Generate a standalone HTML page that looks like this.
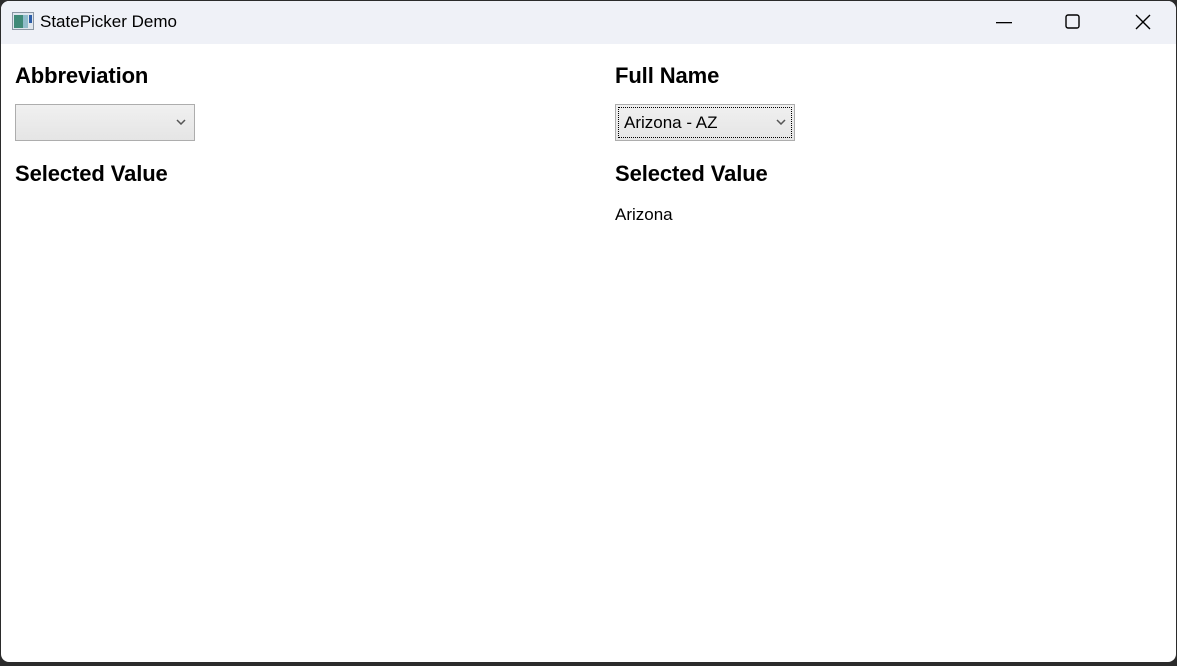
<!DOCTYPE html>
<html><head><style>
html,body{margin:0;padding:0;width:1177px;height:666px;overflow:hidden;background:#2b2b2b;font-family:"Liberation Sans",sans-serif;}
.win{position:absolute;left:1px;top:1px;width:1175px;height:661px;background:#fff;border-radius:8px;overflow:hidden;}
.tb{position:absolute;left:0;top:0;width:100%;height:43px;background:#eff1f7;}
.title{position:absolute;left:39px;top:11px;font-size:17px;color:#000;}
.h{position:absolute;font-size:22px;font-weight:bold;color:#000;letter-spacing:-0.1px;}
.cb{position:absolute;width:180px;height:37px;border:1px solid #adadad;background:linear-gradient(#f0f0f0,#e5e5e5);box-sizing:border-box;}
.chev{position:absolute;right:8px;top:14px;}
.t{position:absolute;font-size:17px;color:#000;}
</style></head><body>
<div class="win">
<div class="tb">
 <svg style="position:absolute;left:11px;top:11px" width="22" height="18" viewBox="0 0 22 18"><rect x="0.5" y="0.5" width="21" height="17" fill="#dfe6ee" stroke="#8a96a3"/><rect x="2" y="3" width="9" height="13" fill="#3f8a78"/><rect x="11" y="3" width="5" height="13" fill="#8fbccb"/><rect x="17" y="3" width="3" height="8" fill="#2d5da8"/></svg>
 <div class="title">StatePicker Demo</div>
 <svg style="position:absolute;left:995px;top:21px" width="16" height="2"><rect width="16" height="1.3" fill="#000"/></svg>
 <svg style="position:absolute;left:1064px;top:13px" width="16" height="16"><rect x="1" y="1" width="13" height="13" rx="2" fill="none" stroke="#000" stroke-width="1.4"/></svg>
 <svg style="position:absolute;left:1134px;top:13px" width="16" height="16"><path d="M1 1L15 15M15 1L1 15" stroke="#000" stroke-width="1.4"/></svg>
</div>
<div class="h" style="left:14px;top:62px">Abbreviation</div>
<div class="cb" style="left:14px;top:103px"><svg class="chev" width="10" height="6"><path d="M1 1L5 5L9 1" fill="none" stroke="#555" stroke-width="1.5"/></svg></div>
<div class="h" style="left:14px;top:160px">Selected Value</div>
<div class="h" style="left:614px;top:62px">Full Name</div>
<div class="cb" style="left:614px;top:103px"><div style="position:absolute;left:2px;top:2px;right:2px;bottom:2px;border:1px dotted #000"></div><div class="t" style="left:8px;top:8px">Arizona - AZ</div><svg class="chev" width="10" height="6"><path d="M1 1L5 5L9 1" fill="none" stroke="#555" stroke-width="1.5"/></svg></div>
<div class="h" style="left:614px;top:160px">Selected Value</div>
<div class="t" style="left:614px;top:204px">Arizona</div>
</div>
</body></html>
